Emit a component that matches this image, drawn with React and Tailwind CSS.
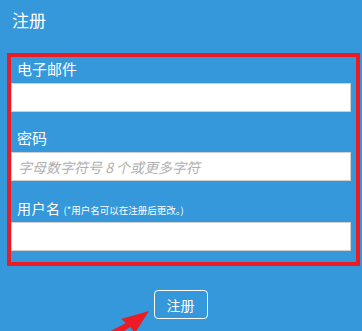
import React from 'react';

const font = { fontFamily: '"Noto Sans CJK SC", "Noto Sans", sans-serif' };

function Field({ label, note, placeholder, className = '' }) {
  return (
    <div className={className}>
      <div className="pl-[6px] h-[18px] leading-[18px] text-white flex items-baseline">
        <span className={note ? 'text-[14px] tracking-[0.5px]' : 'text-[15px]'}>{label}</span>
        {note && <span className="ml-[3px] text-[9.5px]">{note}</span>}
      </div>
      <input
        className="mt-[5px] block w-[340px] h-[29px] bg-white border border-[#cfcfcf] px-[6px] text-[14px] italic placeholder:text-[#b0b0b0] outline-none"
        placeholder={placeholder}
        style={font}
      />
    </div>
  );
}

export default function App() {
  return (
    <div className="relative w-[362px] h-[331px] overflow-hidden bg-[#3598db]" style={font}>
      {/* 标题 */}
      <div className="pl-[12px] pt-[9px] h-[53px] text-[17px] leading-[22px] text-white">注册</div>

      {/* 表单 */}
      <div className="ml-[7px] w-[353px] border-[4px] border-[#ec1c24] pt-[3px] pb-[11px]">
        <Field label="电子邮件" />
        <Field label="密码" placeholder="字母数字符号 8 个或更多字符" className="mt-[17px]" />
        <Field label="用户名" note="(*用户名可以在注册后更改。)" className="mt-[18px]" />
      </div>

      {/* 按钮 */}
      <div className="flex justify-center pt-[24px] pr-[1px]">
        <button className="w-[54px] h-[29px] border-[1.5px] border-white rounded-[4px] text-white text-[14px] leading-none" style={font}>
          注册
        </button>
      </div>

      {/* 箭头 */}
      <svg className="absolute left-[95px] top-[305px]" width="65" height="26" viewBox="0 0 65 26">
        <polygon points="54,6 26,14 31,18 8,30 14,36 35,22 40,28" fill="#ec1c24" />
      </svg>
    </div>
  );
}
